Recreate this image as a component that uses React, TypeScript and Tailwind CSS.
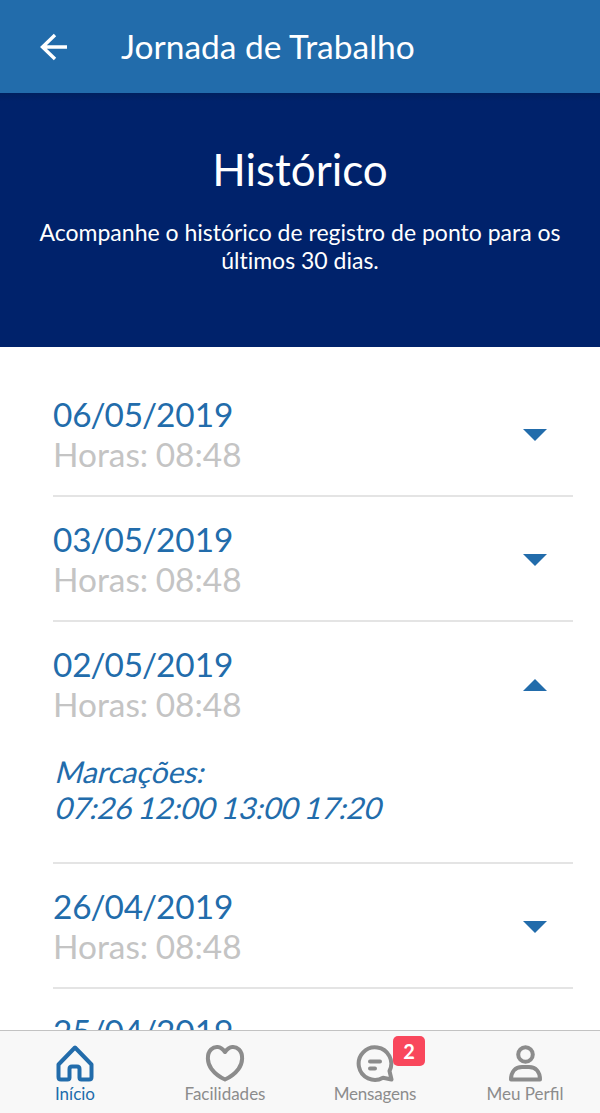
const entries = [
  { date: '06/05/2019', hours: '08:48' },
  { date: '03/05/2019', hours: '08:48' },
  { date: '02/05/2019', hours: '08:48', marks: '07:26 12:00 13:00 17:20' },
  { date: '26/04/2019', hours: '08:48' },
  { date: '25/04/2019', hours: '08:48' },
];

function Entry({ date, hours, marks }: { date: string; hours: string; marks?: string }) {
  const [day, month, year] = date.split('/');
  return (
    <article className="border-b-2 border-[#e4e4e4] pb-[21px] pt-[22px]">
      <div className="flex items-center justify-between pr-[26px]">
        <div className="text-[33.4px] leading-[40px]">
          <h2 className="text-[#226cab]">
            {day}<span className="-mx-[1.2px]">/</span>{month}<span className="-mx-[1.2px]">/</span>{year}
          </h2>
          <p className="text-[#c4c4c4] [word-spacing:-1px]">Horas: {hours}</p>
        </div>
        <svg className="mt-[2px]" width="24" height="12" viewBox="0 0 24 12" fill="#226cab">
          <path d={marks ? 'M0 12 12 0l12 12z' : 'M0 0h24L12 12z'} />
        </svg>
      </div>
      {marks && (
        <div className="pb-[16px] pl-[4px] pt-[29px] text-[30px] leading-[36px] text-[#226cab]">
          <p className="-skew-x-[14deg]">Marcações:</p>
          <p className="-skew-x-[14deg] [word-spacing:-1.7px]">{marks}</p>
        </div>
      )}
    </article>
  );
}

export default function App() {
  return (
    <div className="flex h-[1113px] w-[600px] flex-col overflow-hidden bg-white font-['Lato',sans-serif]">
      <header className="flex h-[93px] shrink-0 items-center bg-[#226cab] pl-[40px] text-white">
        <svg width="28" height="28" viewBox="0 0 28 28" fill="none" stroke="currentColor" strokeWidth="3.4">
          <path d="M27 14H3M15 2 2.5 14 15 26" />
        </svg>
        <h1 className="mb-[2px] ml-[53px] text-[33.5px] leading-[40px]">Jornada de Trabalho</h1>
      </header>
      <section className="h-[254px] shrink-0 bg-[#00226b] bg-linear-to-b from-[#00205e] to-[#00226b] to-[8px] pt-[50px] text-center text-white">
        <h2 className="text-[44px] leading-[52px]">Histórico</h2>
        <p className="mt-[23px] text-[23px] leading-[28px] [font-variant-ligatures:none]">
          Acompanhe o histórico de registro de ponto para os<br />últimos 30 dias.
        </p>
      </section>
      <main className="min-h-0 flex-1 overflow-hidden pl-[53px] pr-[27px] pt-[25px]">
        {entries.map((e) => <Entry key={e.date} {...e} />)}
      </main>
      <nav className="grid h-[83px] shrink-0 grid-cols-4 border-t border-[#c3c3c3] bg-[#f8f8f8] text-[17px] leading-[20px] text-[#8c8c8c]">
        <div className="flex flex-col items-center pt-[12px] text-[#226cab]">
          <svg width="40" height="41" viewBox="0 0 40 41" fill="none" stroke="currentColor" strokeWidth="4" strokeLinecap="round" strokeLinejoin="round">
            <path d="M20 4.500 3.500 21.500V34q0 2.500 2.500 2.500H12.500q2 0 2-2V26q0-2.500 2.500-2.500h5q2.500 0 2.500 2.500v8.500q0 2 2 2H34q2.500 0 2.500-2.500V21.500z" />
          </svg>
          <span>Início</span>
        </div>
        <div className="flex flex-col items-center pt-[12px]">
          <svg width="40" height="41" viewBox="0 0 40 41" fill="none" stroke="currentColor" strokeWidth="4" strokeLinejoin="round">
            <path d="M20 9C15.500 2.500 9.500 3.200 6 6.500C1.500 11 2 20 6.500 26C9.500 30 14 33.800 20 36.500C26 33.800 30.500 30 33.500 26C38 20 38.500 11 34 6.500C30.500 3.200 24.500 2.500 20 9z" />
          </svg>
          <span>Facilidades</span>
        </div>
        <div className="relative flex flex-col items-center pt-[12px]">
          <svg width="40" height="41" viewBox="0 0 40 41" fill="none" stroke="currentColor" strokeWidth="4" strokeLinecap="round" strokeLinejoin="round">
            <path d="M34.500 28A16.300 16.300 0 1 0 28 34.800L36.500 36.500z M15 18.500h10M15 25.500h5" />
          </svg>
          <span className="tracking-[-0.2px]">Mensagens</span>
          <span className="absolute left-[93px] top-[5px] flex h-[30px] w-[32px] items-center justify-center rounded-[5px] bg-[#f9475c] text-[20px] font-bold text-white">2</span>
        </div>
        <div className="flex flex-col items-center pt-[12px]">
          <svg width="40" height="41" viewBox="0 0 40 41" fill="none" stroke="currentColor" strokeWidth="4" strokeLinejoin="round">
            <circle cx="20.500" cy="11.500" r="7.300" />
            <path d="M6 36.500C6 29 10 24 17 24h7C31 24 35 29 35 36.500z" />
          </svg>
          <span>Meu Perfil</span>
        </div>
      </nav>
    </div>
  );
}
